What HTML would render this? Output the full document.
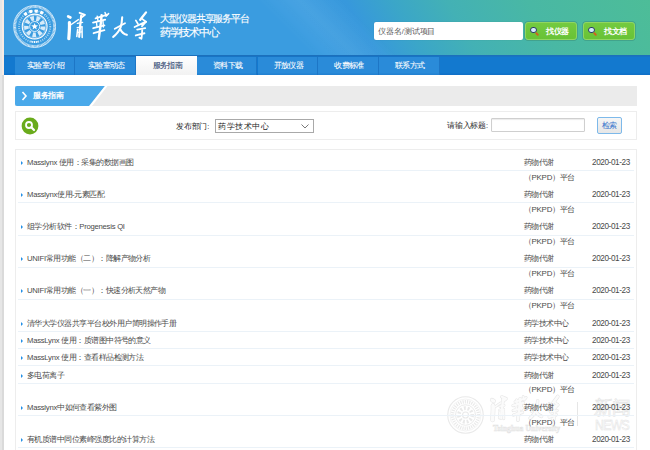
<!DOCTYPE html>
<html><head><meta charset="utf-8">
<style>

*{margin:0;padding:0;box-sizing:border-box}
html,body{width:650px;height:450px;overflow:hidden;background:#fff}
body{position:relative;font-family:"Liberation Sans",sans-serif;color:#444}
.a{position:absolute;white-space:nowrap}
#strip{left:0;top:0;width:4px;height:450px;background:linear-gradient(to right,#e6e6e6 0,#e6e6e6 2px,#dadada 2px,#dadada 4px)}
#pink{left:2px;top:0;width:2px;height:75px;background:#f6ebe5}
#hdr{left:3.5px;top:0;width:646.5px;height:55px;background:linear-gradient(45deg,rgba(255,255,255,0) 44%,rgba(255,255,255,.07) 50%,rgba(255,255,255,0) 56%),linear-gradient(60deg,#3a9ce0 0%,#3a9ce0 48%,#3798dc 55%,#3ba6c8 62%,#43b1b5 70%,#49b8a4 82%,#4dbd98 100%)}
#nav{left:3.5px;top:55px;width:646.5px;height:20px;background:#1379cf;box-shadow:inset 0 1.5px 0 #1c70bc,inset 0 -1.5px 0 #1070c8}
.tab{top:1.5px;height:18.5px;width:60.7px;background:#2a8bd9;border-right:1px solid #1d76c6;box-shadow:inset 0 -1.5px 0 #2382d2;color:#fff;font-size:7.4px;text-align:center;line-height:18px;padding-left:2px}
.tab.on{background:linear-gradient(#fff,#f2f2f2);color:#2f4670;border-right:none;box-shadow:none;top:1px;height:19px;line-height:19px}
#crumb{left:15px;top:86px;width:622px;height:20px;background:#ebebeb}
#crumbb{left:15px;top:86px;width:92px;height:20px}
.t{font-size:7.4px;color:#2a2a2a}

#callig{left:64px;top:6px;font-size:22px;line-height:34px;color:#fff;letter-spacing:-0.5px;transform:skewX(-12deg);font-family:"Liberation Serif",serif}
#ttl1,#ttl2{left:160px;font-size:8.8px;line-height:12px;color:#fff}
#ttl1{top:13px}#ttl2{top:25.5px}
#sinput{left:374px;top:22px;width:149px;height:18px;background:#fff;border-radius:2px;font-size:7.4px;line-height:19px;padding-left:4px;color:#555;box-shadow:0 0 1px rgba(0,0,0,.25)}
.btn{top:22px;width:52px;height:18px;border-radius:3px;background:linear-gradient(#74ca40,#68c236);border:1px solid #90d660;box-shadow:0 0 0 0.7px #3f9c86;color:#fff}
.btn b{position:absolute;left:20px;top:1px;font-size:7.4px;line-height:16px;font-weight:bold}
.mag{position:absolute;left:4px;top:3.5px;width:6.5px;height:6.5px;border:1.1px solid #2b3d63;border-radius:50%;background:#d6ebff}
.mag:after{content:"";position:absolute;left:4.3px;top:5.3px;width:4px;height:2.2px;background:#d0601f;transform:rotate(45deg);border-radius:1px}

#crumbt{left:33px;top:91px;font-size:7.4px;line-height:10px;color:#fff;font-weight:bold}
#tool{left:15px;top:111px;width:622px;height:29px;border:1px solid #ededed}
#sel{left:215px;top:119px;width:99px;height:13.5px;border:1px solid #a9a9a9;font-size:8px;line-height:14px;padding-left:2px;color:#222;background:#fff}
#kw{left:491px;top:118px;width:94px;height:14px;border:1px solid #cfcfcf;border-radius:1px;box-shadow:inset 0 1px 1px rgba(0,0,0,.08)}
#sbtn{left:597px;top:117px;width:25px;height:17px;border:1px solid #7db9ea;border-radius:2px;background:linear-gradient(#f6f6f6,#e6e6e6);color:#3574cc;font-size:7.4px;line-height:15px;text-align:center;text-indent:-1px}
#list{left:15px;top:149px;width:622px;height:310px;border:1px solid #ededed}

.c{font-size:8px;letter-spacing:-0.53px}
.li{left:27px;font-size:7.7px;line-height:10px;color:#4a4a4a;letter-spacing:-0.25px}
.bul{position:absolute;left:-6.5px;top:3px;width:0;height:0;border-left:2.8px solid #2490e6;border-top:2px solid transparent;border-bottom:2px solid transparent;-webkit-text-stroke:0}
.dp,.dp2{left:524px;font-size:7.9px;line-height:10px;color:#4a4a4a;letter-spacing:-0.2px}
.dt{left:592px;font-size:8.2px;line-height:10px;color:#4a4a4a;letter-spacing:-0.4px}
.sep{left:18px;width:616px;height:1px;background:#ebf2f8}
#ttl1 .c{font-size:10px;letter-spacing:-1.1px;-webkit-text-stroke:0.15px #fff}
#ttl2 .c{font-size:11px;letter-spacing:-1.3px;-webkit-text-stroke:0.15px #fff}
.cg{color:#fff;overflow:visible}
.cg .c{position:absolute;left:0;top:0;font-size:16px;line-height:16px;letter-spacing:0;transform-origin:0 0;font-weight:300}
.g1 .c{transform:translate(3px,0) skewX(-12deg) scale(1.2,1.85)}
.g2 .c{transform:translate(3px,0) skewX(-12deg) scale(1.12,1.79)}
.g3 .c{transform:translate(2px,0) skewX(-12deg) scale(1.05,1.33)}
.g4 .c{transform:translate(3px,0) skewX(-12deg) scale(1.0,1.85)}
.tab .c{font-size:8px;letter-spacing:-0.6px;-webkit-text-stroke:0.08px currentColor}
#crumbt .c{font-size:8px;letter-spacing:-0.4px}
#sel .c{font-size:8px;letter-spacing:0.5px}
#sinput .c{font-size:8px;letter-spacing:-0.1px}
.btn .c{font-size:8px;letter-spacing:-0.4px}
#sbtn .c{font-size:8px;letter-spacing:-0.9px}
.wm{color:#ececec}
.wm .c{position:absolute;left:0;top:0;font-size:14px;line-height:14px;letter-spacing:0;transform-origin:0 0;font-weight:300}
.wg1 .c,.wg2 .c,.wg4 .c{transform:skewX(-12deg) scale(1.1,1.8)}
.wg3 .c{transform:skewX(-12deg) scale(1.0,1.3)}
#wmen{left:493px;top:424px;font-size:7.6px;line-height:10px;font-weight:bold;color:#fafafa;-webkit-text-stroke:0.5px #e3e3e3;font-family:"Liberation Serif",serif;letter-spacing:0.1px}
#wmxw{left:594px;top:397.5px;}
#wmxw .c{font-size:19px;line-height:19px;letter-spacing:-1.5px;color:#fff;-webkit-text-stroke:0.6px #e4e4e4;display:inline-block;transform:scaleY(1.0)}
#wmnews{left:595px;top:417.5px;font-size:13px;line-height:13px;color:#fff;-webkit-text-stroke:0.5px #e4e4e4;letter-spacing:-0.8px;transform:scale(0.95,1.1);transform-origin:0 0}
.t .c{letter-spacing:-0.2px}

</style></head><body>

<div class="a" id="strip"></div>
<div class="a" id="pink"></div>
<div class="a" id="hdr"></div>
<svg class="a" style="left:13px;top:4.5px" width="43.3" height="43" viewBox="-21.65 -21.5 43.3 43">
 <g fill="none" stroke="#fff">
  <circle r="21" stroke-width="0.7"/>
  <circle r="19.6" stroke-width="2.2" stroke-dasharray="0.8 0.5" opacity="0.8"/>
  <circle r="15.6" stroke-width="1.9" stroke-dasharray="0.9 1.3" opacity="0.6"/>
  <path d="M-10.6,-11.3 A15.5,15.5 0 0 1 10.6,-11.3" stroke-width="3.2" stroke-dasharray="3 2.6" stroke-dashoffset="-0.5"/>
  <path d="M-4,15 A15.5,15.5 0 0 0 4,15" stroke-width="1.8" stroke-dasharray="1 0.7"/>
  <circle r="12.4" stroke-width="1.1"/>
  <circle r="11.3" stroke-width="0.5" opacity="0.8"/>
  <circle r="8.3" stroke-width="4.6" stroke-dasharray="3.4 2.4" opacity="0.8"/>
  <circle r="5" stroke-width="0.8"/>
 </g>
 <polygon fill="#fff" points="0.00,-3.60 0.88,-1.21 3.42,-1.11 1.43,0.46 2.12,2.91 0.00,1.50 -2.12,2.91 -1.43,0.46 -3.42,-1.11 -0.88,-1.21"/>
</svg>
<svg class="a" style="left:0;top:0" width="160" height="50" viewBox="0 0 160 50">
 <g fill="none" stroke="#fff" stroke-linecap="round" stroke-linejoin="round">
  <!-- 清 -->
  <path d="M68.2,16.4 L70.4,17.5" stroke-width="2.76"/>
  <path d="M69.4,22.6 C69.8,27 69.2,33 68.8,38.6" stroke-width="3.22"/>
  <path d="M70.5,25 L78.4,19.6" stroke-width="1.38"/>
  <path d="M79.6,12.8 L85,14.8 L81.4,17.6" stroke-width="1.84"/>
  <path d="M81.2,15.6 C80.6,22 79.6,30 79.2,36.8" stroke-width="2.18"/>
  <path d="M77.4,23.4 L82.6,22.4" stroke-width="1.38"/>
  <path d="M77.2,27.6 L82.2,26.8" stroke-width="1.38"/>
  <path d="M77.6,29.6 L76.8,36.6" stroke-width="1.49"/>
  <path d="M78,32.4 L81.8,31.8" stroke-width="1.26"/>
  <path d="M82,27.4 L82.2,37.4" stroke-width="1.49"/>
  <!-- 華 -->
  <path d="M95.6,18.4 L107.2,14.6" stroke-width="1.84"/>
  <path d="M105,12.4 L106.4,16 M108.6,13.6 L106,16.2" stroke-width="1.49"/>
  <path d="M97.2,16.2 L98,21" stroke-width="1.49"/>
  <path d="M93,22.6 L105.2,19.6" stroke-width="1.84"/>
  <path d="M93.2,28.2 L104.4,25.4" stroke-width="1.84"/>
  <path d="M93.6,33.2 L104.4,30.2" stroke-width="1.84"/>
  <path d="M101.6,15.2 C101,24 99.6,32 98.8,38.8" stroke-width="2.42"/>
  <path d="M96.4,22 L97,26.6" stroke-width="1.38"/>
  <path d="M103,21 L103.4,27" stroke-width="1.38"/>
  <!-- 大 -->
  <path d="M122.2,17.2 C122,21 121.4,25 120.6,27.4 C119,31 116.4,34.6 113.2,36.8" stroke-width="2.07"/>
  <path d="M114.8,28.8 L125,23.2" stroke-width="1.84"/>
  <path d="M120.4,29.4 C121.4,31.6 122.8,33.8 126.8,34.8" stroke-width="2.18"/>
  <!-- 学 -->
  <path d="M146,12.4 L140.2,19.8" stroke-width="2.30"/>
  <path d="M135.8,20.4 L138,24" stroke-width="1.72"/>
  <path d="M134.6,27 L146,21.6 L142,26.2" stroke-width="1.84"/>
  <path d="M141.6,18.4 L146.2,22" stroke-width="1.61"/>
  <path d="M137.2,29.6 L145.2,28.2" stroke-width="1.84"/>
  <path d="M135.8,35.4 L144.4,33.2" stroke-width="1.95"/>
  <path d="M142.2,30.2 C142,34 141.8,37 141.4,38.8 L139.4,37.6" stroke-width="1.84"/>
 </g>
</svg>
<div class="a" id="ttl1"><span class="c">大型仪器共享服务平台</span></div>
<div class="a" id="ttl2"><span class="c">药学技术中心</span></div>
<div class="a" id="sinput"><span class="c">仪器名</span>/<span class="c">测试项目</span></div>
<div class="a btn" style="left:525px"><i class="mag"></i><b><span class="c">找仪器</span></b></div>
<div class="a btn" style="left:583px"><i class="mag"></i><b><span class="c">找文档</span></b></div>

<div class="a" id="nav">
 <div class="a tab" style="left:11.2px"><span class="c">实验室介绍</span></div>
 <div class="a tab" style="left:71.9px"><span class="c">实验室动态</span></div>
 <div class="a tab on" style="left:132.6px"><span class="c">服务指南</span></div>
 <div class="a tab" style="left:193.3px"><span class="c">资料下载</span></div>
 <div class="a tab" style="left:254.0px"><span class="c">开放仪器</span></div>
 <div class="a tab" style="left:314.7px"><span class="c">收费标准</span></div>
 <div class="a tab" style="left:375.4px"><span class="c">联系方式</span></div>
</div>
<div class="a" id="crumb"></div>
<svg class="a" style="left:15px;top:86px" width="95" height="20" viewBox="0 0 95 20">
 <path d="M2,0 H90 L74,20 H2 Q0,20 0,18 V2 Q0,0 2,0Z" fill="#4aa9ea"/>
 <path d="M90,0 H92.5 L77,20 H74.5Z" fill="#fff"/>
 <path d="M7.5,6 L11,10 L7.5,14" fill="none" stroke="#fff" stroke-width="1.6"/>
</svg>
<div class="a" id="crumbt"><span class="c">服务指南</span></div>
<div class="a" id="tool"></div>
<svg class="a" style="left:21px;top:117px" width="18" height="18" viewBox="0 0 18 18">
 <circle cx="9" cy="9" r="8.4" fill="#6aab1c"/>
 <circle cx="8" cy="8" r="3" fill="none" stroke="#fff" stroke-width="1.8"/>
 <path d="M10.3,10.3 L13,13" stroke="#fff" stroke-width="2.2" stroke-linecap="round"/>
</svg>
<div class="a t" style="left:176px;top:122px;line-height:10px"><span class="c">发布部门</span>:</div>
<div class="a" id="sel"><span class="c">药学技术中心</span><svg style="position:absolute;right:4px;top:4px" width="8" height="5" viewBox="0 0 8 5"><path d="M0.5,0.5 L4,4 L7.5,0.5" fill="none" stroke="#555" stroke-width="0.8"/></svg></div>
<div class="a t" style="left:447px;top:121px;line-height:10px"><span class="c">请输入标题</span>:</div>
<div class="a" id="kw"></div>
<div class="a" id="sbtn"><span class="c">检索</span></div>
<div class="a" id="list"></div>

<svg class="a" style="left:447px;top:396px" width="37" height="38" viewBox="0 0 100 100" preserveAspectRatio="none">
 <g fill="none" stroke="#e9e9e9">
  <circle cx="50" cy="50" r="48" stroke-width="3"/>
  <circle cx="50" cy="50" r="42" stroke-width="1.5"/>
  <circle cx="50" cy="50" r="35" stroke-width="9" stroke-dasharray="3 3"/>
  <circle cx="50" cy="50" r="27" stroke-width="2.5"/>
  <circle cx="50" cy="50" r="18" stroke-width="10" stroke-dasharray="5 5"/>
  <circle cx="50" cy="50" r="8" stroke-width="3"/>
 </g>
</svg>
<svg class="a" style="left:0;top:0" width="650" height="450" viewBox="0 0 650 450">
 <g transform="translate(434.29,385.49) scale(0.846,0.888)" fill="none" stroke="#e6e6e6" stroke-linecap="round" stroke-linejoin="round">
 <!-- 清 -->
  <path d="M68.2,16.4 L70.4,17.5" stroke-width="4.89"/>
  <path d="M69.4,22.6 C69.8,27 69.2,33 68.8,38.6" stroke-width="5.49"/>
  <path d="M70.5,25 L78.4,19.6" stroke-width="3.09"/>
  <path d="M79.6,12.8 L85,14.8 L81.4,17.6" stroke-width="3.69"/>
  <path d="M81.2,15.6 C80.6,22 79.6,30 79.2,36.8" stroke-width="4.13"/>
  <path d="M77.4,23.4 L82.6,22.4" stroke-width="3.09"/>
  <path d="M77.2,27.6 L82.2,26.8" stroke-width="3.09"/>
  <path d="M77.6,29.6 L76.8,36.6" stroke-width="3.24"/>
  <path d="M78,32.4 L81.8,31.8" stroke-width="2.94"/>
  <path d="M82,27.4 L82.2,37.4" stroke-width="3.24"/>
  <!-- 華 -->
  <path d="M95.6,18.4 L107.2,14.6" stroke-width="3.69"/>
  <path d="M105,12.4 L106.4,16 M108.6,13.6 L106,16.2" stroke-width="3.24"/>
  <path d="M97.2,16.2 L98,21" stroke-width="3.24"/>
  <path d="M93,22.6 L105.2,19.6" stroke-width="3.69"/>
  <path d="M93.2,28.2 L104.4,25.4" stroke-width="3.69"/>
  <path d="M93.6,33.2 L104.4,30.2" stroke-width="3.69"/>
  <path d="M101.6,15.2 C101,24 99.6,32 98.8,38.8" stroke-width="4.45"/>
  <path d="M96.4,22 L97,26.6" stroke-width="3.09"/>
  <path d="M103,21 L103.4,27" stroke-width="3.09"/>
  <!-- 大 -->
  <path d="M122.2,17.2 C122,21 121.4,25 120.6,27.4 C119,31 116.4,34.6 113.2,36.8" stroke-width="3.99"/>
  <path d="M114.8,28.8 L125,23.2" stroke-width="3.69"/>
  <path d="M120.4,29.4 C121.4,31.6 122.8,33.8 126.8,34.8" stroke-width="4.13"/>
  <!-- 学 -->
  <path d="M146,12.4 L140.2,19.8" stroke-width="4.29"/>
  <path d="M135.8,20.4 L138,24" stroke-width="3.54"/>
  <path d="M134.6,27 L146,21.6 L142,26.2" stroke-width="3.69"/>
  <path d="M141.6,18.4 L146.2,22" stroke-width="3.39"/>
  <path d="M137.2,29.6 L145.2,28.2" stroke-width="3.69"/>
  <path d="M135.8,35.4 L144.4,33.2" stroke-width="3.83"/>
  <path d="M142.2,30.2 C142,34 141.8,37 141.4,38.8 L139.4,37.6" stroke-width="3.69"/>
 
 </g>
 <g transform="translate(434.29,385.49) scale(0.846,0.888)" fill="none" stroke="#fbfbfb" stroke-linecap="round" stroke-linejoin="round">
 <!-- 清 -->
  <path d="M68.2,16.4 L70.4,17.5" stroke-width="3.59"/>
  <path d="M69.4,22.6 C69.8,27 69.2,33 68.8,38.6" stroke-width="4.19"/>
  <path d="M70.5,25 L78.4,19.6" stroke-width="1.79"/>
  <path d="M79.6,12.8 L85,14.8 L81.4,17.6" stroke-width="2.39"/>
  <path d="M81.2,15.6 C80.6,22 79.6,30 79.2,36.8" stroke-width="2.83"/>
  <path d="M77.4,23.4 L82.6,22.4" stroke-width="1.79"/>
  <path d="M77.2,27.6 L82.2,26.8" stroke-width="1.79"/>
  <path d="M77.6,29.6 L76.8,36.6" stroke-width="1.94"/>
  <path d="M78,32.4 L81.8,31.8" stroke-width="1.64"/>
  <path d="M82,27.4 L82.2,37.4" stroke-width="1.94"/>
  <!-- 華 -->
  <path d="M95.6,18.4 L107.2,14.6" stroke-width="2.39"/>
  <path d="M105,12.4 L106.4,16 M108.6,13.6 L106,16.2" stroke-width="1.94"/>
  <path d="M97.2,16.2 L98,21" stroke-width="1.94"/>
  <path d="M93,22.6 L105.2,19.6" stroke-width="2.39"/>
  <path d="M93.2,28.2 L104.4,25.4" stroke-width="2.39"/>
  <path d="M93.6,33.2 L104.4,30.2" stroke-width="2.39"/>
  <path d="M101.6,15.2 C101,24 99.6,32 98.8,38.8" stroke-width="3.15"/>
  <path d="M96.4,22 L97,26.6" stroke-width="1.79"/>
  <path d="M103,21 L103.4,27" stroke-width="1.79"/>
  <!-- 大 -->
  <path d="M122.2,17.2 C122,21 121.4,25 120.6,27.4 C119,31 116.4,34.6 113.2,36.8" stroke-width="2.69"/>
  <path d="M114.8,28.8 L125,23.2" stroke-width="2.39"/>
  <path d="M120.4,29.4 C121.4,31.6 122.8,33.8 126.8,34.8" stroke-width="2.83"/>
  <!-- 学 -->
  <path d="M146,12.4 L140.2,19.8" stroke-width="2.99"/>
  <path d="M135.8,20.4 L138,24" stroke-width="2.24"/>
  <path d="M134.6,27 L146,21.6 L142,26.2" stroke-width="2.39"/>
  <path d="M141.6,18.4 L146.2,22" stroke-width="2.09"/>
  <path d="M137.2,29.6 L145.2,28.2" stroke-width="2.39"/>
  <path d="M135.8,35.4 L144.4,33.2" stroke-width="2.54"/>
  <path d="M142.2,30.2 C142,34 141.8,37 141.4,38.8 L139.4,37.6" stroke-width="2.39"/>
 
 </g>
</svg>
<div class="a" id="wmen">Tsinghua University</div>
<div class="a" style="left:577px;top:402px;width:1.2px;height:24px;background:#e6e6e6"></div>
<div class="a" id="wmxw"><span class="c">新闻</span></div>
<div class="a" id="wmnews">NEWS</div>

<div class="a li" style="top:158.0px"><i class="bul"></i>Masslynx <span class="c">使用：采集的数据画图</span></div>
<div class="a dp" style="top:158.0px"><span class="c">药物代谢</span></div>
<div class="a dp2" style="top:172.6px"><span class="c">（</span>PKPD<span class="c">）平台</span></div>
<div class="a dt" style="top:158.0px">2020-01-23</div>
<div class="a sep" style="top:170.4px"></div>
<div class="a li" style="top:190.0px"><i class="bul"></i>Masslynx<span class="c">使用</span>-<span class="c">元素匹配</span></div>
<div class="a dp" style="top:190.0px"><span class="c">药物代谢</span></div>
<div class="a dp2" style="top:204.6px"><span class="c">（</span>PKPD<span class="c">）平台</span></div>
<div class="a dt" style="top:190.0px">2020-01-23</div>
<div class="a sep" style="top:202.4px"></div>
<div class="a li" style="top:222.2px"><i class="bul"></i><span class="c">组学分析软件：</span>Progenesis QI</div>
<div class="a dp" style="top:222.2px"><span class="c">药物代谢</span></div>
<div class="a dp2" style="top:236.8px"><span class="c">（</span>PKPD<span class="c">）平台</span></div>
<div class="a dt" style="top:222.2px">2020-01-23</div>
<div class="a sep" style="top:234.5px"></div>
<div class="a li" style="top:254.4px"><i class="bul"></i>UNIFI<span class="c">常用功能（二）：降解产物分析</span></div>
<div class="a dp" style="top:254.4px"><span class="c">药物代谢</span></div>
<div class="a dp2" style="top:269.0px"><span class="c">（</span>PKPD<span class="c">）平台</span></div>
<div class="a dt" style="top:254.4px">2020-01-23</div>
<div class="a sep" style="top:267.0px"></div>
<div class="a li" style="top:286.4px"><i class="bul"></i>UNIFI<span class="c">常用功能（一）：快速分析天然产物</span></div>
<div class="a dp" style="top:286.4px"><span class="c">药物代谢</span></div>
<div class="a dp2" style="top:301.0px"><span class="c">（</span>PKPD<span class="c">）平台</span></div>
<div class="a dt" style="top:286.4px">2020-01-23</div>
<div class="a sep" style="top:299.2px"></div>
<div class="a li" style="top:318.8px"><i class="bul"></i><span class="c">清华大学仪器共享平台校外用户简明操作手册</span></div>
<div class="a dp" style="top:318.8px"><span class="c">药学技术中心</span></div>
<div class="a dt" style="top:318.8px">2020-01-23</div>
<div class="a sep" style="top:331.2px"></div>
<div class="a li" style="top:336.0px"><i class="bul"></i>MassLynx <span class="c">使用：质谱图中符号的意义</span></div>
<div class="a dp" style="top:336.0px"><span class="c">药学技术中心</span></div>
<div class="a dt" style="top:336.0px">2020-01-23</div>
<div class="a sep" style="top:348.3px"></div>
<div class="a li" style="top:353.2px"><i class="bul"></i>MassLynx <span class="c">使用：查看样品检测方法</span></div>
<div class="a dp" style="top:353.2px"><span class="c">药学技术中心</span></div>
<div class="a dt" style="top:353.2px">2020-01-23</div>
<div class="a sep" style="top:365.3px"></div>
<div class="a li" style="top:370.8px"><i class="bul"></i><span class="c">多电荷离子</span></div>
<div class="a dp" style="top:370.8px"><span class="c">药物代谢</span></div>
<div class="a dp2" style="top:385.4px"><span class="c">（</span>PKPD<span class="c">）平台</span></div>
<div class="a dt" style="top:370.8px">2020-01-23</div>
<div class="a sep" style="top:383.0px"></div>
<div class="a li" style="top:403.2px"><i class="bul"></i>Masslynx<span class="c">中如何查看紫外图</span></div>
<div class="a dp" style="top:403.2px"><span class="c">药物代谢</span></div>
<div class="a dp2" style="top:417.8px"><span class="c">（</span>PKPD<span class="c">）平台</span></div>
<div class="a dt" style="top:403.2px">2020-01-23</div>
<div class="a sep" style="top:415.2px"></div>
<div class="a li" style="top:435.3px"><i class="bul"></i><span class="c">有机质谱中同位素峰强度比的计算方法</span></div>
<div class="a dp" style="top:435.3px"><span class="c">药物代谢</span></div>
<div class="a dp2" style="top:449.9px"><span class="c">（</span>PKPD<span class="c">）平台</span></div>
<div class="a dt" style="top:435.3px">2020-01-23</div>
<div class="a sep" style="top:447.3px"></div>
</body></html>
